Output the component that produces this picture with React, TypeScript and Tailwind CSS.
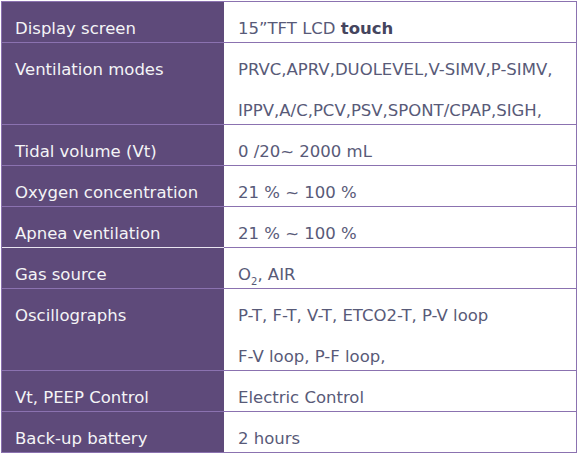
import React from 'react';

type Spec = {
  label: string;
  lines: React.ReactNode[];
  whiteRule?: boolean;
};

const specs: Spec[] = [
  {
    label: 'Display screen',
    lines: [
      <>
        15”TFT LCD <span className="font-semibold text-[#45455e]">touch</span>
      </>,
    ],
  },
  {
    label: 'Ventilation modes',
    lines: ['PRVC,APRV,DUOLEVEL,V-SIMV,P-SIMV,', 'IPPV,A/C,PCV,PSV,SPONT/CPAP,SIGH,'],
  },
  { label: 'Tidal volume (Vt)', lines: ['0 /20~ 2000 mL'] },
  { label: 'Oxygen concentration', lines: ['21 % ~ 100 %'] },
  { label: 'Apnea ventilation', lines: ['21 % ~ 100 %'], whiteRule: true },
  {
    label: 'Gas source',
    lines: [
      <>
        O<sub className="text-[10px] align-[-2px]">2</sub>, AIR
      </>,
    ],
  },
  {
    label: 'Oscillographs',
    lines: ['P-T, F-T, V-T, ETCO2-T, P-V loop', 'F-V loop, P-F loop,'],
  },
  { label: 'Vt, PEEP Control', lines: ['Electric Control'] },
  { label: 'Back-up battery', lines: ['2 hours'] },
];

export default function App() {
  return (
    <div className="w-[578px] h-[455px] bg-white pt-px pl-px font-['DejaVu_Sans',sans-serif] text-[16.5px]">
      <div className="w-[576px] border border-[#8b72b0]">
        {specs.map((s, i) => {
          const last = i === specs.length - 1;
          const h = s.lines.length > 1 ? 'h-[82px]' : 'h-[41px]';
          return (
            <div key={s.label} className={`flex ${last ? 'h-[40px]' : h}`}>
              <div
                className={`w-[222px] shrink-0 bg-[#5e4a7a] pl-[13px] pt-[6px] leading-[41px] text-[#f4f4f6] ${
                  last ? '' : s.whiteRule ? 'border-b border-[#e9e5f0]' : 'border-b border-[#8b72b0]'
                }`}
              >
                {s.label}
              </div>
              <div
                className={`flex-1 pl-[14px] pt-[6px] leading-[41px] text-[#585a78] ${
                  last ? '' : 'border-b border-[#8b72b0]'
                }`}
              >
                {s.lines.map((l, j) => (
                  <div key={j} className="whitespace-nowrap">
                    {l}
                  </div>
                ))}
              </div>
            </div>
          );
        })}
      </div>
    </div>
  );
}
